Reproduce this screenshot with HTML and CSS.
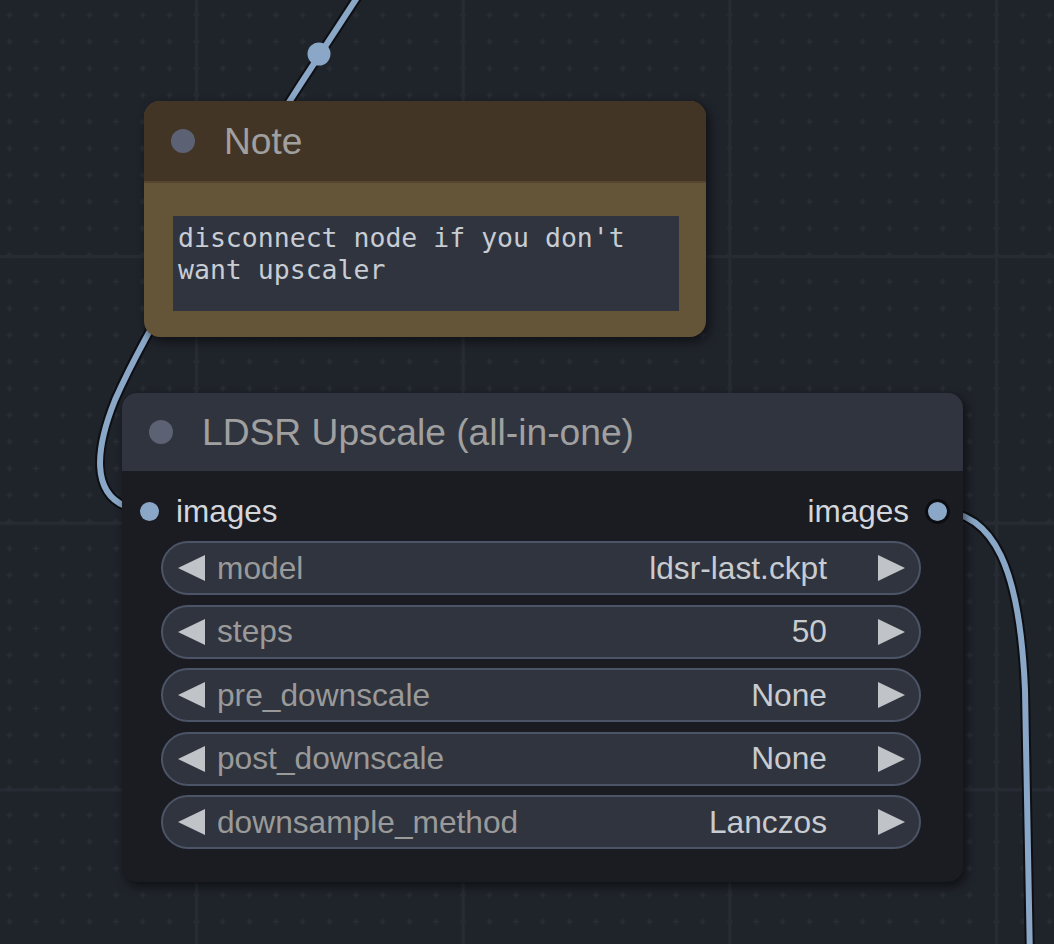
FILE: index.html
```html
<!DOCTYPE html>
<html>
<head>
<meta charset="utf-8">
<link rel="stylesheet" href="styles.css">
</head>
<body>
<div class="canvas">
  <svg class="board" width="1054" height="944" viewBox="0 0 1054 944">
    <defs>
      <pattern id="minor" x="-3.83" y="1.67" width="26.667" height="26.667" patternUnits="userSpaceOnUse">
        <path d="M10.33 13.33h6M13.33 10.33v6" stroke="#2a2e37" stroke-width="1.6"/>
      </pattern>
      <pattern id="major" x="-71.67" y="-11.67" width="266.667" height="266.667" patternUnits="userSpaceOnUse">
        <rect x="0" y="0" width="3" height="266.667" fill="#272b33"/>
        <rect x="0" y="0" width="266.667" height="3" fill="#272b33"/>
      </pattern>
    </defs>
    <rect width="1054" height="944" fill="#1f232a"/>
    <rect width="1054" height="944" fill="url(#minor)"/>
    <rect width="1054" height="944" fill="url(#major)"/>
    <g fill="none" stroke-linecap="round">
      <path class="wire-edge" d="M362 -10 L300 85 C230 195 150 320 115 400 C95 450 92 492 125 506 L150 511"/>
      <path class="wire" d="M362 -10 L300 85 C230 195 150 320 115 400 C95 450 92 492 125 506 L150 511"/>
      <path class="wire-edge" d="M937 511 C995 511 1020 570 1025 690 L1030 960"/>
      <path class="wire" d="M937 511 C995 511 1020 570 1025 690 L1030 960"/>
    </g>
    <circle cx="319" cy="54" r="11.5" fill="#8aa7c7"/>
  </svg>

  <div class="node note">
    <div class="title note-title">
      <span class="title-dot"></span>
      <span class="title-text">Note</span>
    </div>
    <div class="note-body">
      <div class="textarea">disconnect node if you don't want upscaler</div>
    </div>
  </div>

  <div class="node ldsr">
    <div class="title ldsr-title">
      <span class="title-dot"></span>
      <span class="title-text">LDSR Upscale (all-in-one)</span>
    </div>
    <div class="ldsr-body">
      <div class="slots">
        <div class="slot slot-in">
          <span class="slot-dot"></span>
          <span class="slot-label">images</span>
        </div>
        <div class="slot slot-out">
          <span class="slot-label">images</span>
          <span class="slot-dot slot-dot-out"></span>
        </div>
      </div>
      <div class="widgets">
        <div class="widget">
          <svg class="arrow" width="27" height="26" viewBox="0 0 27 26"><polygon points="0,13 27,0 27,26"/></svg>
          <span class="w-label">model</span>
          <span class="w-value">ldsr-last.ckpt</span>
          <svg class="arrow arrow-r" width="27" height="26" viewBox="0 0 27 26"><polygon points="27,13 0,0 0,26"/></svg>
        </div>
        <div class="widget">
          <svg class="arrow" width="27" height="26" viewBox="0 0 27 26"><polygon points="0,13 27,0 27,26"/></svg>
          <span class="w-label">steps</span>
          <span class="w-value">50</span>
          <svg class="arrow arrow-r" width="27" height="26" viewBox="0 0 27 26"><polygon points="27,13 0,0 0,26"/></svg>
        </div>
        <div class="widget">
          <svg class="arrow" width="27" height="26" viewBox="0 0 27 26"><polygon points="0,13 27,0 27,26"/></svg>
          <span class="w-label">pre_downscale</span>
          <span class="w-value">None</span>
          <svg class="arrow arrow-r" width="27" height="26" viewBox="0 0 27 26"><polygon points="27,13 0,0 0,26"/></svg>
        </div>
        <div class="widget">
          <svg class="arrow" width="27" height="26" viewBox="0 0 27 26"><polygon points="0,13 27,0 27,26"/></svg>
          <span class="w-label">post_downscale</span>
          <span class="w-value">None</span>
          <svg class="arrow arrow-r" width="27" height="26" viewBox="0 0 27 26"><polygon points="27,13 0,0 0,26"/></svg>
        </div>
        <div class="widget">
          <svg class="arrow" width="27" height="26" viewBox="0 0 27 26"><polygon points="0,13 27,0 27,26"/></svg>
          <span class="w-label">downsample_method</span>
          <span class="w-value">Lanczos</span>
          <svg class="arrow arrow-r" width="27" height="26" viewBox="0 0 27 26"><polygon points="27,13 0,0 0,26"/></svg>
        </div>
      </div>
    </div>
  </div>
</div>
</body>
</html>
```

FILE: styles.css
```css
* { box-sizing: border-box; }

html, body {
  margin: 0;
  padding: 0;
  background: #1f232a;
}

.canvas {
  position: relative;
  width: 1054px;
  height: 944px;
  overflow: hidden;
  font-family: "Liberation Sans", Arial, sans-serif;
}

.board {
  position: absolute;
  left: 0;
  top: 0;
  display: block;
}

.wire-edge {
  stroke: #0d0f13;
  stroke-width: 10;
}

.wire {
  stroke: #8aa7c7;
  stroke-width: 6;
}

.node {
  position: absolute;
  display: flex;
  flex-direction: column;
  box-shadow: 3px 4px 10px rgba(0, 0, 0, 0.55);
}

.title {
  display: flex;
  align-items: center;
  padding-left: 27px;
  gap: 29px;
  flex: none;
}

.title-dot {
  width: 24px;
  height: 24px;
  border-radius: 50%;
  background: #5c6273;
  flex: none;
}

.title-text {
  font-size: 37.2px;
  color: #a0a0a0;
  white-space: nowrap;
}

/* Note node */
.note {
  left: 144px;
  top: 101px;
  width: 562px;
  height: 236px;
  border-radius: 16px;
  background: #645538;
}

.note-title {
  height: 82px;
  background: #433525;
  border-radius: 16px 16px 0 0;
  border-bottom: 2px solid #544631;
}

.note-body {
  padding: 33px 27px 0 29px;
}

.textarea {
  width: 506px;
  height: 95px;
  background: #30343f;
  padding: 6px 5px;
  font-family: "DejaVu Sans Mono", "Liberation Mono", monospace;
  font-size: 26.5px;
  line-height: 31.5px;
  color: #c8ccd3;
  white-space: pre-wrap;
}

/* LDSR node */
.ldsr {
  left: 122px;
  top: 393px;
  width: 841px;
  height: 489px;
  border-radius: 15px;
  background: #1a1c22;
}

.ldsr-title {
  height: 78px;
  background: #30343e;
  border-radius: 15px 15px 0 0;
}

.ldsr-body {
  display: flex;
  flex-direction: column;
}

.slots {
  display: flex;
  justify-content: space-between;
  align-items: center;
  height: 44px;
  margin-top: 18px;
  padding: 0 13.5px 0 17.5px;
}

.slot {
  display: flex;
  align-items: center;
}

.slot-in { gap: 17.5px; }
.slot-out { gap: 15.5px; }

.slot-label {
  font-size: 31.5px;
  color: #d3d6db;
}

.slot-dot {
  width: 19px;
  height: 19px;
  border-radius: 50%;
  background: #8aa7c7;
  flex: none;
}

.slot-dot-out {
  width: 25px;
  height: 25px;
  border: 3px solid #0c0d10;
}

.widgets {
  display: flex;
  flex-direction: column;
  gap: 9.6px;
  margin-top: 8px;
  padding: 0 42px 0 39px;
}

.widget {
  height: 54px;
  border: 2px solid #4c5467;
  border-radius: 27px;
  background: #30343e;
  display: flex;
  align-items: center;
  padding: 0 14px 0 15px;
  font-size: 31.7px;
}

.arrow {
  flex: none;
  display: block;
  fill: #c0c4c9;
}

.w-label {
  margin-left: 12px;
  color: #9a9a9a;
  white-space: nowrap;
}

.w-value {
  margin-left: auto;
  color: #c8cbd0;
  white-space: nowrap;
}

.arrow-r {
  margin-left: 51px;
}
```
